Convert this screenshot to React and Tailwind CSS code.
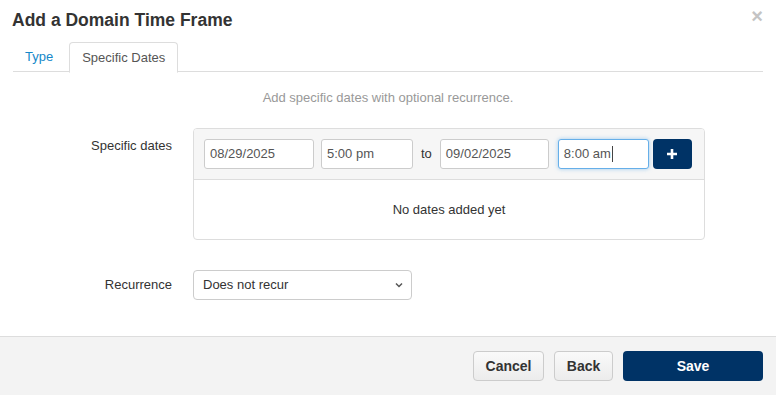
import React from "react";

const font = { fontFamily: '"Liberation Sans", Arial, sans-serif' };

function Input({ value, w, focused }) {
  return (
    <div
      className={`h-[30px] ${w} rounded-[3px] border bg-white px-[5px] flex items-center text-[13px] text-[#555] ${
        focused
          ? "border-[#66afe9] shadow-[0_0_4px_rgba(102,175,233,0.6)]"
          : "border-[#ccc]"
      }`}
    >
      {value}
      {focused && <span className="inline-block w-px h-[16px] bg-[#444] ml-px" />}
    </div>
  );
}

export default function App() {
  return (
    <div style={font} className="w-[776px] h-[395px] bg-white flex flex-col text-[#333] overflow-hidden">
      {/* Header */}
      <div className="relative pt-[10px] px-[12px]">
        <h1 className="text-[17.5px] leading-5 font-bold text-[#333]">Add a Domain Time Frame</h1>
        <span className="absolute right-[13px] top-[6px] text-[20px] leading-5 font-bold text-[#c4c4c4]">×</span>
      </div>

      {/* Tabs */}
      <div className="mx-[13px] mt-[12px] flex border-b border-[#ddd] h-[30px]">
        <div className="px-[12px] mr-[4px] flex items-center text-[13px] text-[#1688c9]">Type</div>
        <div className="px-[12px] -mb-px h-[31px] flex items-center text-[13px] text-[#555] bg-white border border-[#ddd] border-b-white rounded-t-[4px]">
          Specific Dates
        </div>
      </div>

      {/* Subtitle */}
      <p className="mt-[17px] text-center text-[13px] leading-[18px] text-[#999]">
        Add specific dates with optional recurrence.
      </p>

      {/* Specific dates row */}
      <div className="mt-[21px] flex">
        <div className="w-[172px] text-right text-[13px] pt-[8px] text-[#333]">Specific dates</div>
        <div className="ml-[21px] w-[512px] border border-[#ddd] rounded-[4px] overflow-hidden">
          <div className="bg-[#f6f6f6] border-b border-[#ddd] p-[10px] flex items-center">
            <Input value="08/29/2025" w="w-[110px]" />
            <div className="w-[7px]" />
            <Input value="5:00 pm" w="w-[92px]" />
            <span className="mx-[8px] text-[13px] text-[#333]">to</span>
            <Input value="09/02/2025" w="w-[109px]" />
            <div className="w-[9px]" />
            <Input value="8:00 am" w="w-[91px]" focused />
            <button className="ml-[4px] w-[39px] h-[30px] rounded-[4px] bg-[#003366] flex items-center justify-center">
              <svg width="12" height="12" viewBox="0 0 12 12">
                <path d="M6 1v10M1 6h10" stroke="white" strokeWidth="2.6" />
              </svg>
            </button>
          </div>
          <div className="h-[59px] flex items-center justify-center text-[13px] text-[#333]">
            No dates added yet
          </div>
        </div>
      </div>

      {/* Recurrence row */}
      <div className="mt-[30px] flex items-center">
        <div className="w-[172px] text-right text-[13px] text-[#333]">Recurrence</div>
        <div className="ml-[21px] w-[219px] h-[30px] rounded-[4px] border border-[#ccc] bg-white flex items-center justify-between pl-[9px] pr-[7px] text-[13px] text-[#333]">
          <span>Does not recur</span>
          <svg width="10" height="10" viewBox="0 0 10 10">
            <path d="M2 3.5l3 3 3-3" fill="none" stroke="#555" strokeWidth="1.5" />
          </svg>
        </div>
      </div>

      {/* Footer */}
      <div className="mt-[36px] flex-1 bg-[#f3f3f3] border-t border-[#ddd] flex justify-end items-start pt-[14px] pr-[13px] gap-[10px]">
        <button className="h-[30px] w-[71px] rounded-[4px] border border-[#ccc] bg-gradient-to-b from-[#fafafa] to-[#ececec] text-[14px] font-bold text-[#333]">
          Cancel
        </button>
        <button className="h-[30px] w-[59px] rounded-[4px] border border-[#ccc] bg-gradient-to-b from-[#fafafa] to-[#ececec] text-[14px] font-bold text-[#333]">
          Back
        </button>
        <button className="h-[30px] w-[140px] rounded-[4px] bg-[#003366] text-[14px] font-bold text-white">
          Save
        </button>
      </div>
    </div>
  );
}
